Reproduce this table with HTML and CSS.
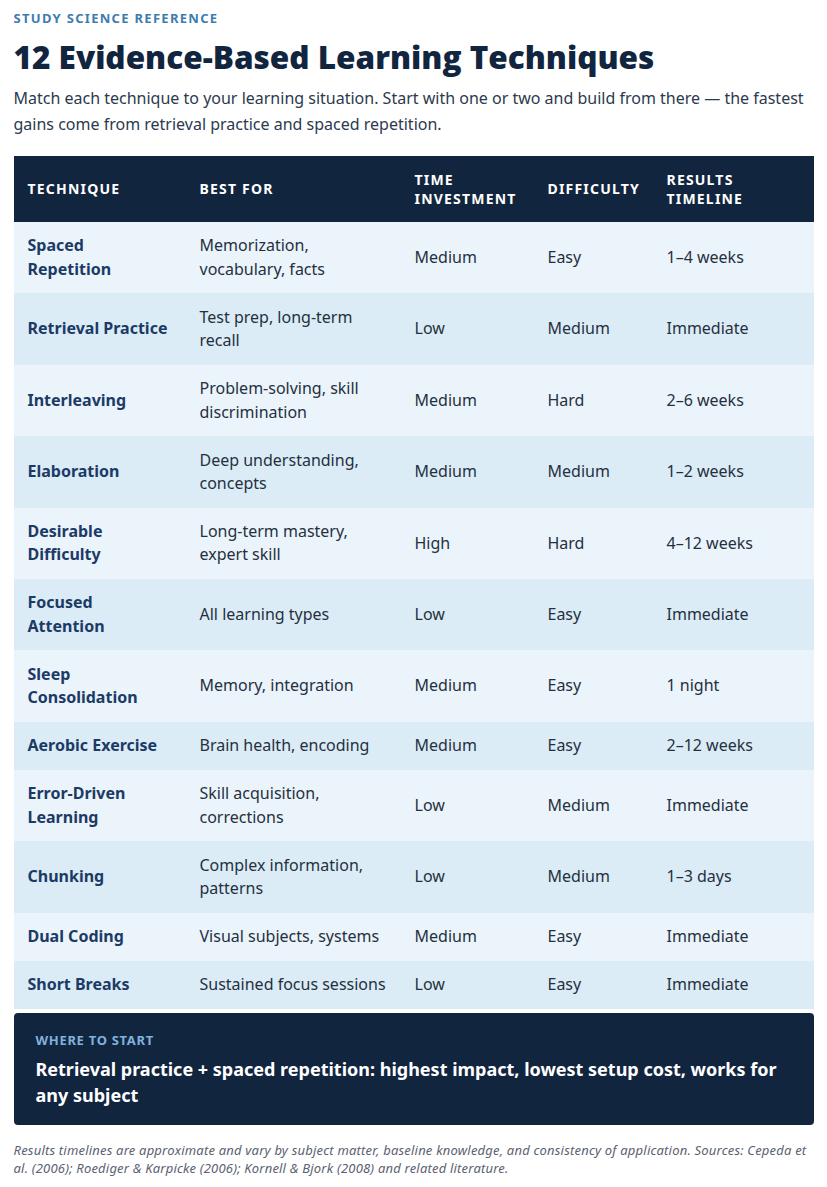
FILE: index.html
```html
<!DOCTYPE html>
<html lang="en">
<head>
<meta charset="utf-8">
<title>12 Evidence-Based Learning Techniques</title>
<link rel="stylesheet" href="styles.css">
</head>
<body>
<main class="page">
  <header class="intro">
    <div class="eyebrow">Study Science Reference</div>
    <h1 class="title">12 Evidence-Based Learning Techniques</h1>
    <p class="lede">Match each technique to your learning situation. Start with one or two and build from there — the fastest gains come from retrieval practice and spaced repetition.</p>
  </header>

  <table class="techniques">
    <colgroup>
      <col class="c1"><col class="c2"><col class="c3"><col class="c4"><col class="c5">
    </colgroup>
    <thead>
      <tr>
        <th>Technique</th>
        <th>Best For</th>
        <th>Time Investment</th>
        <th>Difficulty</th>
        <th>Results Timeline</th>
      </tr>
    </thead>
    <tbody>
      <tr><td class="name">Spaced Repetition</td><td>Memorization, vocabulary, facts</td><td>Medium</td><td>Easy</td><td>1–4 weeks</td></tr>
      <tr><td class="name">Retrieval Practice</td><td>Test prep, long-term recall</td><td>Low</td><td>Medium</td><td>Immediate</td></tr>
      <tr><td class="name">Interleaving</td><td>Problem-solving, skill discrimination</td><td>Medium</td><td>Hard</td><td>2–6 weeks</td></tr>
      <tr><td class="name">Elaboration</td><td>Deep understanding, concepts</td><td>Medium</td><td>Medium</td><td>1–2 weeks</td></tr>
      <tr><td class="name">Desirable Difficulty</td><td>Long-term mastery, expert skill</td><td>High</td><td>Hard</td><td>4–12 weeks</td></tr>
      <tr><td class="name">Focused Attention</td><td>All learning types</td><td>Low</td><td>Easy</td><td>Immediate</td></tr>
      <tr><td class="name">Sleep Consolidation</td><td>Memory, integration</td><td>Medium</td><td>Easy</td><td>1 night</td></tr>
      <tr><td class="name">Aerobic Exercise</td><td>Brain health, encoding</td><td>Medium</td><td>Easy</td><td>2–12 weeks</td></tr>
      <tr><td class="name">Error-Driven Learning</td><td>Skill acquisition, corrections</td><td>Low</td><td>Medium</td><td>Immediate</td></tr>
      <tr><td class="name">Chunking</td><td>Complex information, patterns</td><td>Low</td><td>Medium</td><td>1–3 days</td></tr>
      <tr><td class="name">Dual Coding</td><td>Visual subjects, systems</td><td>Medium</td><td>Easy</td><td>Immediate</td></tr>
      <tr><td class="name">Short Breaks</td><td>Sustained focus sessions</td><td>Low</td><td>Easy</td><td>Immediate</td></tr>
    </tbody>
  </table>

  <section class="callout">
    <div class="callout-label">Where to Start</div>
    <p class="callout-text">Retrieval practice + spaced repetition: highest impact, lowest setup cost, works for any subject</p>
  </section>

  <p class="footnote">Results timelines are approximate and vary by subject matter, baseline knowledge, and consistency of application. Sources: Cepeda et al. (2006); Roediger &amp; Karpicke (2006); Kornell &amp; Bjork (2008) and related literature.</p>
</main>
</body>
</html>
```

FILE: styles.css
```css
* { box-sizing: border-box; }

html, body {
  margin: 0;
  padding: 0;
  background: #ffffff;
}

body {
  font-family: "Noto Sans", "Open Sans", "Liberation Sans", sans-serif;
  color: #1f2a3a;
}

.page {
  max-width: 800px;
  margin: 0 auto;
  padding-top: 8px;
}

.eyebrow {
  font-size: 13px;
  font-weight: 700;
  letter-spacing: 1.3px;
  text-transform: uppercase;
  color: #3f7cae;
  line-height: 20px;
}

.title {
  margin: 8px 0 0;
  font-family: "Open Sans", "Noto Sans", sans-serif;
  font-size: 31.5px;
  font-weight: 800;
  line-height: 42px;
  color: #12253f;
}

.lede {
  margin: 7px 0 0;
  font-size: 16px;
  line-height: 26px;
  color: #2b3a4e;
}

.techniques {
  width: 100%;
  margin-top: 19px;
  border-collapse: collapse;
  table-layout: fixed;
}

.c1 { width: 172px; }
.c2 { width: 215px; }
.c3 { width: 133px; }
.c4 { width: 119px; }
.c5 { width: 161px; }

.techniques th {
  background: #12253f;
  color: #ffffff;
  font-size: 14px;
  font-weight: 700;
  letter-spacing: 1.2px;
  text-transform: uppercase;
  text-align: left;
  line-height: 19.5px;
  padding: 13px 14px;
  height: 66px;
  vertical-align: middle;
}

.techniques td {
  font-size: 16px;
  line-height: 23.4px;
  padding: 12.3px 14px;
  vertical-align: middle;
  color: #25303f;
}

.techniques tbody tr:nth-child(odd) td { background: #ebf4fb; }
.techniques tbody tr:nth-child(even) td { background: #dbecf6; }

.techniques td.name {
  font-weight: 700;
  color: #1c3a66;
}

.callout {
  margin-top: 4px;
  background: #12253f;
  border-radius: 4px;
  padding: 18px 22px 17px;
}

.callout-label {
  font-size: 13px;
  font-weight: 700;
  letter-spacing: 0.7px;
  text-transform: uppercase;
  color: #7fb2dc;
  line-height: 18px;
}

.callout-text {
  margin: 7px 0 0;
  font-size: 18px;
  font-weight: 700;
  line-height: 26px;
  color: #ffffff;
}

.footnote {
  margin: 16px 0 0;
  font-size: 13px;
  font-style: italic;
  line-height: 18px;
  letter-spacing: 0.2px;
  color: #5a6270;
}
```
